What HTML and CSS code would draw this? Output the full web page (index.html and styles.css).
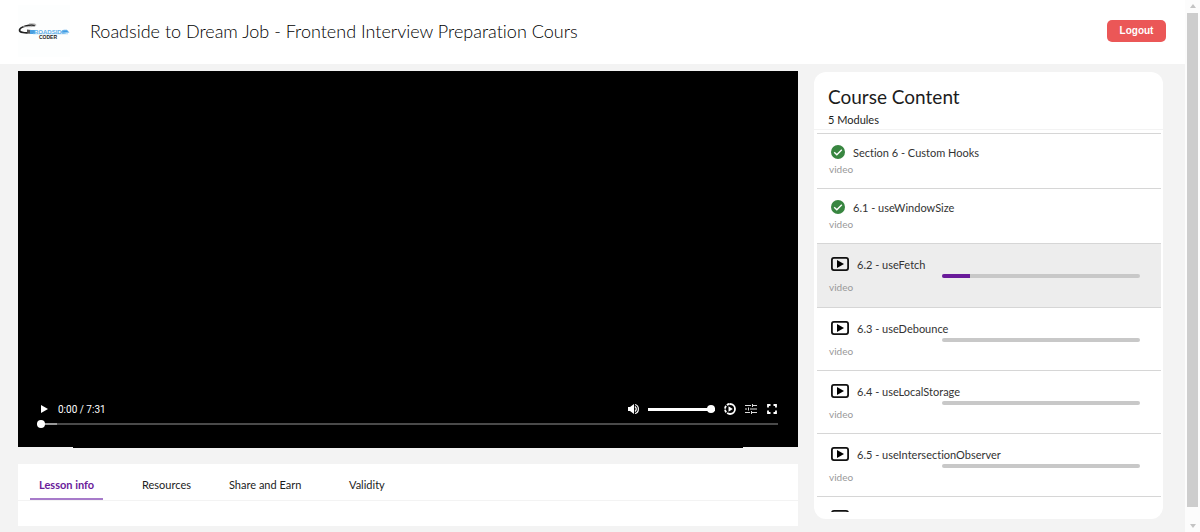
FILE: index.html
```
<!DOCTYPE html>
<html lang="en">
    <head>
        <meta charset="utf-8">
        <title>Roadside to Dream Job</title>
        <link rel="stylesheet" href="styles.css">
    </head>
    <body>
        <svg class="sprite" aria-hidden="true">
            <symbol id="check" viewBox="0 0 14 14">
                <circle cx="7" cy="7" r="7" fill="#388640"/>
                <path d="M3.2 7.2l2.6 2.5 5-5" fill="none" stroke="#fff" stroke-width="1.4"/>
            </symbol>
            <symbol id="play" viewBox="0 0 18 14">
                <rect x="0.9" y="0.9" width="16.2" height="12.2" rx="2" fill="none" stroke="#111" stroke-width="1.8"/>
                <path d="M6 3v8L13 7z" fill="#000"/>
            </symbol>
        </svg>
        <div class="window">
            <div class="page">
                <header class="header">
                    <svg class="logo" viewBox="0 0 52 52" role="img" aria-label="Roadside Coder">
                        <rect width="52" height="52" fill="#fdfefe"/>
                        <path d="M17 20.5C12 19 2 22 1.5 25c-.3 2.5 6 3.500 11 2.500" fill="none" stroke="#222" stroke-width="1.6"/>
                        <path d="M5 21.5c8 .5 13 0 13-1.500 0-1.200-4-1.500-7-1" fill="none" stroke="#999" stroke-width="0.8"/>
                        <path d="M9 24.5l4 .5v4l-4-1.5z" fill="#555"/>
                        <path d="M12 25h5v4h-5z" fill="#4a9fe0"/>
                        <path d="M43 27.5h8l-2-2.5h-3l-2 1zM15 28.8h35" fill="#3d9be3" stroke="#8cc6f0" stroke-width="0.7"/>
                        <text x="16" y="29" class="logo-road">ROADSIDE</text>
                        <text x="21" y="34" class="logo-coder">CODER</text>
                    </svg>
                    <h1 class="title">Roadside to Dream Job - Frontend Interview Preparation Cours</h1>
                    <button type="button" class="logout">Logout</button>
                </header>
                <main class="main">
                    <div class="lesson">
                        <section class="player">
                            <div class="controls">
                                <button type="button" class="icon-button" aria-label="Play">
                                    <svg width="8" height="8" viewBox="0 0 8 8"><path d="M0 0v8l7-4z" fill="#fff"/></svg>
                                </button>
                                <span class="time">0:00 / 7:31</span>
                                <button type="button" class="icon-button" aria-label="Mute">
                                    <svg width="12" height="12" viewBox="0 0 12 12"><path d="M1 4v4h2l4 3V1L3 4z" fill="#fff"/><path d="M8 3.5q2.5 2.5 0 5M8 1.5c4.500 1 4.500 8 0 9" fill="none" stroke="#fff" stroke-width="1.2"/></svg>
                                </button>
                                <input type="range" class="volume" aria-label="Volume" value="100">
                                <button type="button" class="icon-button" aria-label="Speed">
                                    <svg width="12" height="12" viewBox="0 0 12 12"><path d="M6 1a5 5 0 0 1 0 10" fill="none" stroke="#fff" stroke-width="1.8"/><path d="M6 11A5 5 0 0 1 6 1" fill="none" stroke="#fff" stroke-width="1.8" stroke-dasharray="3 1"/><path d="M4.5 3.3v5.4L8.8 6z" fill="#fff"/></svg>
                                </button>
                                <button type="button" class="icon-button" aria-label="Quality">
                                    <svg width="12" height="12" viewBox="0 0 12 12"><path d="M0 2.5h6M8 2.5h4M0 6h2M5 6h7M0 9.5h5M7 9.5h5M7.500 1v3M3.500 4.500v3M6.500 8v3" fill="none" stroke="#ddd"/></svg>
                                </button>
                                <button type="button" class="icon-button" aria-label="Fullscreen">
                                    <svg width="12" height="12" viewBox="0 0 12 12"><path d="M2 4.5V2h2.5M7.5 2H10v2.5M10 7.5V10H7.5M4.500 10H2V7.500" fill="none" stroke="#fff" stroke-width="1.8"/></svg>
                                </button>
                            </div>
                            <input type="range" class="seek" aria-label="Seek" value="0">
                        </section>
                        <div class="player-edge"></div>
                        <section class="info">
                            <nav class="tabs">
                                <a href="#" class="tab active">Lesson info</a>
                                <a href="#" class="tab">Resources</a>
                                <a href="#" class="tab">Share and Earn</a>
                                <a href="#" class="tab">Validity</a>
                            </nav>
                        </section>
                    </div>
                    <aside class="content">
                        <div class="content-head">
                            <h2 class="content-title">Course Content</h2>
                            <p class="modules">5 Modules</p>
                        </div>
                        <ul class="list">
                            <li class="item done">
                                <div class="name"><svg class="check"><use href="#check"/></svg>Section 6 - Custom Hooks</div>
                                <div class="kind">video</div>
                            </li>
                            <li class="item done">
                                <div class="name"><svg class="check"><use href="#check"/></svg>6.1 - useWindowSize</div>
                                <div class="kind">video</div>
                            </li>
                            <li class="item current">
                                <div class="name"><svg class="play"><use href="#play"/></svg>6.2 - useFetch</div>
                                <div class="bar"><div class="fill" style="width: 14%"></div></div>
                                <div class="kind">video</div>
                            </li>
                            <li class="item">
                                <div class="name"><svg class="play"><use href="#play"/></svg>6.3 - useDebounce</div>
                                <div class="bar"></div>
                                <div class="kind">video</div>
                            </li>
                            <li class="item">
                                <div class="name"><svg class="play"><use href="#play"/></svg>6.4 - useLocalStorage</div>
                                <div class="bar"></div>
                                <div class="kind">video</div>
                            </li>
                            <li class="item">
                                <div class="name"><svg class="play"><use href="#play"/></svg>6.5 - useIntersectionObserver</div>
                                <div class="bar"></div>
                                <div class="kind">video</div>
                            </li>
                            <li class="item">
                                <div class="name"><svg class="play"><use href="#play"/></svg></div>
                            </li>
                        </ul>
                    </aside>
                </main>
            </div>
            <div class="scrollbar">
                <div class="arrow up"></div>
                <div class="thumb"></div>
                <div class="arrow down"></div>
            </div>
        </div>
    </body>
</html>
```
FILE: styles.css
```
* {
    box-sizing: border-box;
}
body {
    margin: 0;
    font-family: Lato, "Open Sans", sans-serif;
    font-variant-ligatures: none;
    color: #1c1c1c;
    overflow: hidden;
}
h1, h2, p, ul {
    margin: 0;
    padding: 0;
    font-weight: 400;
}
button {
    border: 0;
    padding: 0;
    background: none;
}
.sprite {
    display: none;
}
.window {
    display: flex;
    height: 100vh;
}
.page {
    flex: 1;
    background: #f3f3f3;
}
.header {
    display: flex;
    align-items: center;
    height: 64px;
    padding: 0 19px 2px 18px;
    background: white;
}
.logo {
    width: 52px;
    height: 52px;
}
.logo-road {
    font: bold 6px "Liberation Sans", sans-serif;
    fill: #62b0ea;
}
.logo-coder {
    font: bold 5px "Liberation Sans", sans-serif;
    fill: #222;
}
.title {
    flex: 1;
    margin-left: 20px;
    font-size: 18px;
    font-weight: 300;
    color: black;
}
.logout {
    width: 59px;
    height: 22px;
    padding-bottom: 2px;
    border-radius: 5px;
    background: #eb5757;
    color: white;
    font: bold 10px "Liberation Sans", sans-serif;
}
.main {
    display: grid;
    grid-template-columns: 780fr 349fr;
    gap: 16px;
    align-items: start;
    padding: 7px 22px 0 18px;
}
.player {
    display: flex;
    flex-direction: column;
    justify-content: flex-end;
    aspect-ratio: 780 / 376;
    padding: 0 20px 18px 19px;
    background: black;
}
.controls {
    display: flex;
    align-items: center;
    gap: 9px;
    height: 20px;
    padding-left: 4px;
}
.icon-button {
    display: flex;
}
.time {
    flex: 1;
    color: white;
    font: 400 10px Roboto, sans-serif;
}
.volume, .seek {
    appearance: none;
    height: 10px;
    margin: 0;
    background: linear-gradient(white, white) center / 100% 3px no-repeat;
}
.volume {
    width: 67px;
}
.seek {
    width: 100%;
    background: linear-gradient(to right, #999 20px, #4a4a4a 20px) center / 100% 2px no-repeat;
}
.volume::-webkit-slider-thumb, .seek::-webkit-slider-thumb {
    appearance: none;
    width: 8px;
    height: 8px;
    border-radius: 50%;
    background: white;
}
.player-edge {
    height: 1px;
    margin: 0 55px;
    background: black;
}
.info {
    height: 62px;
    margin-top: 16px;
    background: white;
}
.tabs {
    display: grid;
    grid-template-columns: 103px 87px 120px auto;
    justify-items: start;
    height: 37px;
    padding-left: 12px;
    border-bottom: 1px solid #f3f3f3;
}
.tab {
    height: 36px;
    padding: 0 9px;
    line-height: 42px;
    font-size: 11px;
    color: #1c1c1c;
    text-decoration: none;
}
.active {
    border-bottom: 2px solid #a77bca;
    color: #6a1b9a;
    font-weight: 700;
}
.content {
    height: 447px;
    margin-top: 1px;
    padding-bottom: 7px;
    border-radius: 12px;
    background: white;
}
.content-head {
    height: 58px;
    padding: 12px 14px 0;
    border-bottom: 1px solid #f3f3f3;
}
.content-title {
    font-size: 19px;
    line-height: 26px;
}
.modules {
    font-size: 11px;
    line-height: 20px;
}
.list {
    height: 382px;
    padding: 3px 2px 0 3px;
    overflow: hidden;
    list-style: none;
}
.item {
    height: 63px;
    padding: 11px 21px 0 12px;
    border-top: 1px solid #d6d6d6;
    font-size: 11px;
}
.done {
    height: 55px;
    padding-top: 9px;
}
.current {
    height: 64px;
    background: #ededed;
}
.name {
    display: flex;
    align-items: center;
    height: 18px;
    padding-left: 2px;
    color: #333;
}
.check {
    width: 14px;
    height: 14px;
    margin-right: 8px;
}
.play {
    width: 18px;
    height: 14px;
    margin-right: 8px;
}
.bar {
    width: 198px;
    height: 4px;
    margin: 1px 0 0 auto;
    border-radius: 2px;
    background: #c8c8c8;
    overflow: hidden;
}
.fill {
    height: 100%;
    background: #6a1b9a;
}
.kind {
    margin-top: 2px;
    color: #999;
    font-size: 10px;
    line-height: 14px;
}
.done .kind {
    margin-top: 1px;
}
.scrollbar {
    display: flex;
    flex-direction: column;
    align-items: center;
    width: 15px;
    padding: 4px 2px 4px 2px;
    background: #fcfcfc;
}
.arrow {
    border: 3px solid transparent;
}
.up {
    border-top: 0;
    border-bottom: 4px solid #c4c4c4;
}
.down {
    border-bottom: 0;
    border-top: 4px solid #c4c4c4;
}
.thumb {
    flex: 1;
    width: 11px;
    margin: 5px 0 17px;
    background: #cdcdcd;
}
```
